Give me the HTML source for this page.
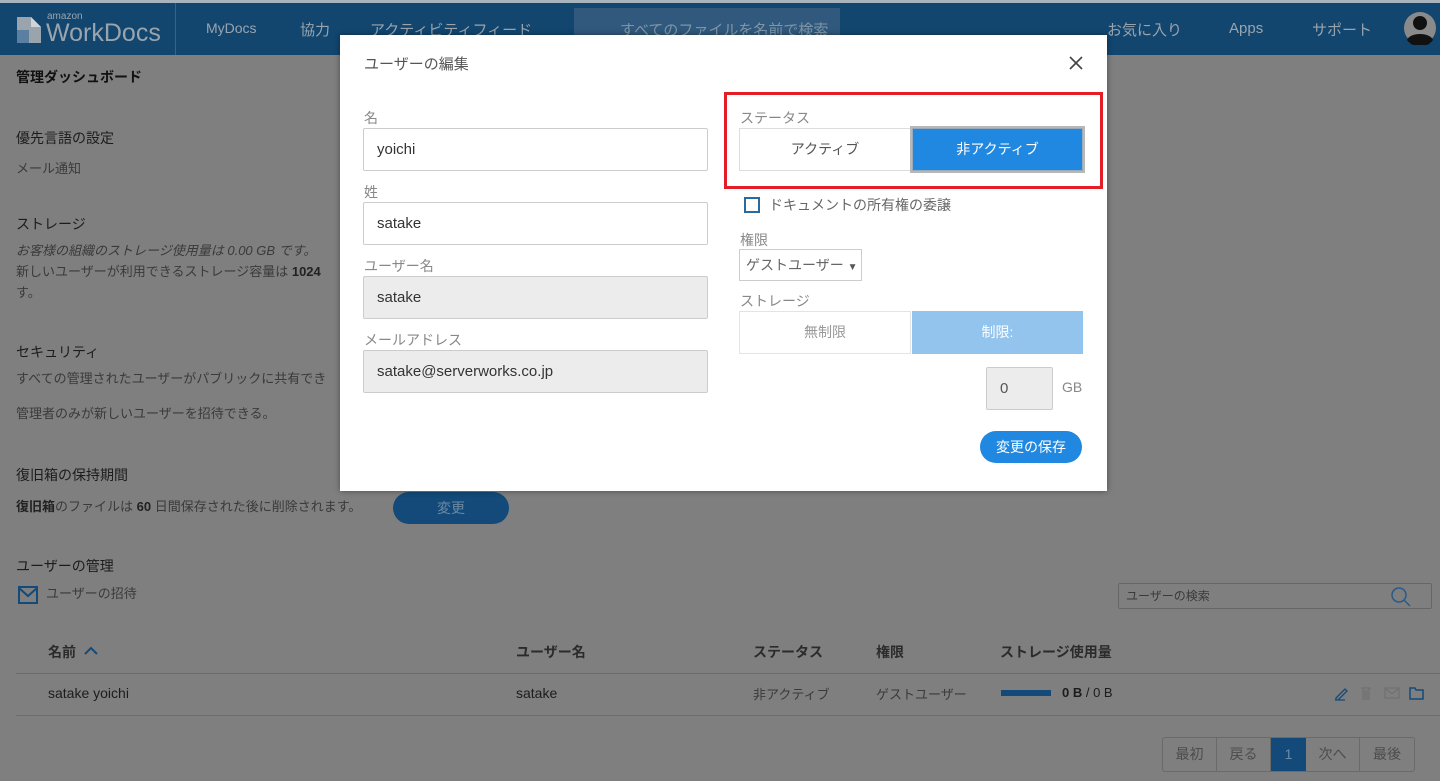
<!DOCTYPE html>
<html><head><meta charset="utf-8"><style>
*{box-sizing:border-box;margin:0;padding:0}
html,body{width:1440px;height:781px;overflow:hidden;background:#7f7f7f}
body{font-family:"Liberation Sans","Noto Sans CJK JP",sans-serif;position:relative;color:#1c1c1c}
#bg{position:absolute;left:0;top:0;width:1440px;height:781px;background:#7f7f7f}
.a{position:absolute;white-space:nowrap}
.hdr{position:absolute;left:0;top:3px;width:1440px;height:52px;background:#12466f}
.top{position:absolute;left:0;top:0;width:1440px;height:3px;background:#a8b3bd}
.g{color:#3a3a3a}
.m{position:absolute;left:340px;top:35px;width:767px;height:456px;background:#fff;box-shadow:0 0 6px rgba(0,0,0,.4)}
.lbl{position:absolute;font-size:14px;color:#888}
.inp{position:absolute;border:1px solid #ccc;border-radius:2px;font-size:15px;color:#333;padding-left:13px;display:flex;align-items:center}
.gr{background:#ececec}
</style></head><body>
<div id="bg"></div>
<div class="top"></div>
<div class="hdr">
 <svg class="a" style="left:17px;top:14px" width="24" height="26" viewBox="0 0 24 26"><path d="M0 0h14l10 10v16H0z" fill="#9aa4ad"/><path d="M0 13h12v13H0z" fill="#5b7fa0"/><path d="M14 0v10h10z" fill="#d0d5da"/></svg>
 <div class="a" style="left:47px;top:8px;font-size:10px;color:#9aa4ad">amazon</div>
 <div class="a" style="left:46px;top:16px;font-size:25px;color:#9aa4ad">WorkDocs</div>
 <div class="a" style="left:175px;top:0;width:1px;height:52px;background:#3a6286"></div>
 <div class="a" style="left:206px;top:17px;font-size:14px;color:#9aa4ad">MyDocs</div>
 <div class="a" style="left:300px;top:16px;font-size:15px;color:#9aa4ad">協力</div>
 <div class="a" style="left:370px;top:16px;font-size:15px;color:#9aa4ad">アクティビティフィード</div>
 <div class="a" style="left:574px;top:5px;width:266px;height:30px;background:#30597d"></div>
 <div class="a" style="left:620px;top:16px;font-size:15px;color:#7f95a8">すべてのファイルを名前で検索</div>
 <div class="a" style="left:1107px;top:16px;font-size:15px;color:#9aa4ad">お気に入り</div>
 <div class="a" style="left:1229px;top:17px;font-size:15px;color:#9aa4ad">Apps</div>
 <div class="a" style="left:1312px;top:16px;font-size:15px;color:#9aa4ad">サポート</div>
 <svg class="a" style="left:1404px;top:8px" width="32" height="34" viewBox="0 0 32 34"><circle cx="16" cy="17" r="16" fill="#8a8a8a"/><circle cx="16" cy="12" r="7" fill="#111"/><path d="M3 29c3-8 23-8 26 0a16 16 0 0 1-26 0z" fill="#111"/></svg>
</div>
<div class="a" style="left:16px;top:67px;font-size:14px;font-weight:bold;color:#111">管理ダッシュボード</div>
<div class="a" style="left:16px;top:128px;font-size:14px">優先言語の設定</div>
<div class="a g" style="left:16px;top:158px;font-size:13px">メール通知</div>
<div class="a" style="left:16px;top:214px;font-size:14px">ストレージ</div>
<div class="a g" style="left:16px;top:240px;font-size:13px;font-style:italic">お客様の組織のストレージ使用量は 0.00 GB です。</div>
<div class="a g" style="left:16px;top:261px;font-size:13px">新しいユーザーが利用できるストレージ容量は <b style="color:#222">1024</b></div>
<div class="a g" style="left:16px;top:282px;font-size:13px">す。</div>
<div class="a" style="left:16px;top:342px;font-size:14px">セキュリティ</div>
<div class="a g" style="left:16px;top:368px;font-size:13px">すべての管理されたユーザーがパブリックに共有でき</div>
<div class="a g" style="left:16px;top:403px;font-size:13px">管理者のみが新しいユーザーを招待できる。</div>
<div class="a" style="left:16px;top:465px;font-size:14px">復旧箱の保持期間</div>
<div class="a g" style="left:16px;top:496px;font-size:13px"><b style="color:#222">復旧箱</b>のファイルは <b style="color:#222">60</b> 日間保存された後に削除されます。</div>
<div class="a" style="left:393px;top:492px;width:116px;height:32px;border-radius:16px;background:#134a79;color:#6b8aa6;font-size:14px;text-align:center;line-height:32px">変更</div>
<div class="a" style="left:16px;top:556px;font-size:14px">ユーザーの管理</div>
<svg class="a" style="left:18px;top:586px" width="20" height="18" viewBox="0 0 20 18"><rect x="1" y="1" width="18" height="16" fill="none" stroke="#134a79" stroke-width="2"/><path d="M1 2l9 8 9-8" fill="none" stroke="#134a79" stroke-width="2"/></svg>
<div class="a g" style="left:46px;top:583px;font-size:13px">ユーザーの招待</div>
<div class="a" style="left:1118px;top:583px;width:314px;height:26px;border:1px solid #666;border-radius:2px"></div>
<div class="a g" style="left:1126px;top:587px;font-size:12px">ユーザーの検索</div>
<svg class="a" style="left:1390px;top:586px" width="22" height="22" viewBox="0 0 22 22"><circle cx="9" cy="9" r="7" fill="none" stroke="#2a5a88" stroke-width="1.5"/><path d="M14 14l6 6" stroke="#2a5a88" stroke-width="1.5"/></svg>
<div class="a" style="left:48px;top:642px;font-size:14px;font-weight:bold;color:#2b2b2b">名前</div>
<svg class="a" style="left:84px;top:646px" width="14" height="10" viewBox="0 0 14 10"><path d="M1 8l6-6 6 6" fill="none" stroke="#134a79" stroke-width="2"/></svg>
<div class="a" style="left:516px;top:642px;font-size:14px;font-weight:bold;color:#2b2b2b">ユーザー名</div>
<div class="a" style="left:753px;top:642px;font-size:14px;font-weight:bold;color:#2b2b2b">ステータス</div>
<div class="a" style="left:876px;top:642px;font-size:14px;font-weight:bold;color:#2b2b2b">権限</div>
<div class="a" style="left:1000px;top:642px;font-size:14px;font-weight:bold;color:#2b2b2b">ストレージ使用量</div>
<div class="a" style="left:16px;top:673px;width:1424px;height:1px;background:#6c6c6c"></div>
<div class="a" style="left:16px;top:715px;width:1424px;height:1px;background:#6c6c6c"></div>
<div class="a" style="left:48px;top:685px;font-size:14px">satake yoichi</div>
<div class="a" style="left:516px;top:685px;font-size:14px">satake</div>
<div class="a g" style="left:753px;top:684px;font-size:13px">非アクティブ</div>
<div class="a g" style="left:876px;top:684px;font-size:13px">ゲストユーザー</div>
<div class="a" style="left:1001px;top:690px;width:50px;height:6px;background:#134a79"></div>
<div class="a" style="left:1062px;top:685px;font-size:13px"><b>0 B</b> / 0 B</div>
<svg class="a" style="left:1334px;top:685px" width="90" height="16" viewBox="0 0 90 16"><path d="M2 13l9-9 2 2-9 9H2zM1 15h10" fill="none" stroke="#134a79" stroke-width="1.3"/><path d="M27 3h10M29 3v11h6V3M31 5v8M33 5v8" fill="none" stroke="#6e6e6e" stroke-width="1"/><rect x="51" y="3" width="14" height="10" fill="none" stroke="#6e6e6e"/><path d="M51 3l7 6 7-6" fill="none" stroke="#6e6e6e"/><path d="M76 3h5l1 2h7v9H76z" fill="none" stroke="#134a79" stroke-width="1.5"/></svg>
<div class="a" style="left:1162px;top:737px;width:253px;height:35px;border:1px solid #6a6a6a;border-radius:3px;display:flex;font-size:14px;color:#4c4c4c">
 <div style="width:54px;text-align:center;line-height:33px;border-right:1px solid #6a6a6a">最初</div>
 <div style="width:54px;text-align:center;line-height:33px;border-right:1px solid #6a6a6a">戻る</div>
 <div style="width:35px;text-align:center;line-height:33px;background:#134a79;color:#6b8aa6">1</div>
 <div style="width:54px;text-align:center;line-height:33px;border-right:1px solid #6a6a6a">次へ</div>
 <div style="width:54px;text-align:center;line-height:33px">最後</div>
</div>

<div class="m">
 <div class="a" style="left:24px;top:18px;font-size:15px;color:#555">ユーザーの編集</div>
 <svg class="a" style="left:729px;top:21px" width="14" height="14" viewBox="0 0 14 14"><path d="M1 1l12 12M13 1L1 13" stroke="#444" stroke-width="1.6"/></svg>
 <div class="lbl" style="left:24px;top:73px">名</div>
 <div class="inp" style="left:23px;top:93px;width:345px;height:43px">yoichi</div>
 <div class="lbl" style="left:24px;top:147px">姓</div>
 <div class="inp" style="left:23px;top:167px;width:345px;height:43px">satake</div>
 <div class="lbl" style="left:24px;top:221px">ユーザー名</div>
 <div class="inp gr" style="left:23px;top:241px;width:345px;height:43px">satake</div>
 <div class="lbl" style="left:24px;top:295px">メールアドレス</div>
 <div class="inp gr" style="left:23px;top:315px;width:345px;height:43px">satake@serverworks.co.jp</div>

 <div class="a" style="left:384px;top:57px;width:379px;height:97px;border:3px solid #e41e26"></div>
 <div class="lbl" style="left:400px;top:73px">ステータス</div>
 <div class="a" style="left:399px;top:93px;width:172px;height:43px;border:1px solid #ddd;font-size:14px;color:#555;text-align:center;line-height:41px">アクティブ</div>
 <div class="a" style="left:570px;top:91px;width:175px;height:47px;border:2px solid #b8b8b8;background:#2088e0;box-shadow:inset 0 0 0 1px #9ab;font-size:14px;color:#fff;text-align:center;line-height:43px">非アクティブ</div>
 <div class="a" style="left:404px;top:162px;width:16px;height:16px;border:2px solid #2a6a9a"></div>
 <div class="a" style="left:429px;top:160px;font-size:14px;color:#666">ドキュメントの所有権の委譲</div>
 <div class="lbl" style="left:400px;top:195px">権限</div>
 <div class="a" style="left:399px;top:214px;width:123px;height:32px;border:1px solid #ccc;font-size:14px;color:#666;padding-left:6px;line-height:30px">ゲストユーザー <span style="font-size:10px;color:#555">▼</span></div>
 <div class="lbl" style="left:400px;top:256px">ストレージ</div>
 <div class="a" style="left:399px;top:276px;width:172px;height:43px;border:1px solid #e4e4e4;font-size:14px;color:#999;text-align:center;line-height:41px">無制限</div>
 <div class="a" style="left:572px;top:276px;width:171px;height:43px;background:#92c4ee;font-size:14px;color:#fff;text-align:center;line-height:43px">制限:</div>
 <div class="a" style="left:646px;top:332px;width:67px;height:43px;border:1px solid #ccc;border-radius:2px;background:#ececec;font-size:15px;color:#555;padding-left:13px;line-height:41px">0</div>
 <div class="a" style="left:722px;top:344px;font-size:14px;color:#888">GB</div>
 <div class="a" style="left:640px;top:396px;width:102px;height:32px;border-radius:16px;background:#2088e0;color:#fff;font-size:14px;text-align:center;line-height:32px">変更の保存</div>
</div>
</body></html>
